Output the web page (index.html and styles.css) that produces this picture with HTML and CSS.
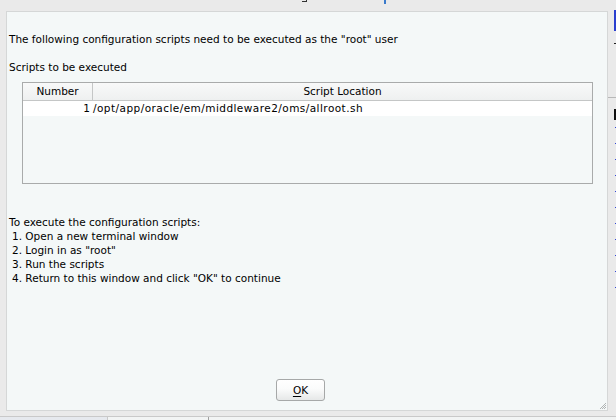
FILE: index.html
```html
<!DOCTYPE html>
<html>
<head>
<meta charset="utf-8">
<link rel="stylesheet" href="styles.css">
</head>
<body>
<div class="screen">
  <div class="topbar">
    <span class="frag frag-g"></span>
    <span class="frag frag-b"></span>
  </div>
  <div class="middle">
    <div class="dialog">
      <p class="intro">The following configuration scripts need to be executed as the "root" user</p>
      <p class="label">Scripts to be executed</p>
      <div class="table">
        <div class="thead">
          <div class="c-num">Number</div>
          <div class="c-loc">Script Location</div>
        </div>
        <div class="trow">
          <div class="c-num">1</div>
          <div class="c-loc path">/opt/app/oracle/em/middleware2/oms/allroot.sh</div>
        </div>
      </div>
      <div class="steps">
        <div>To execute the configuration scripts:</div>
        <div class="step">1. Open a new terminal window</div>
        <div class="step">2. Login in as "root"</div>
        <div class="step">3. Run the scripts</div>
        <div class="step">4. Return to this window and click "OK" to continue</div>
      </div>
      <div class="actions">
        <button class="btn"><u>O</u>K</button>
      </div>
      <svg class="grip" width="8" height="8" viewBox="0 0 8 8">
        <path d="M7 1 L1 7 M7 3 L3 7 M7 5 L5 7" stroke="#b0b4b4" stroke-width="1"/>
      </svg>
    </div>
    <div class="rstrip">
      <div class="r-blue"></div>
      <div class="r-tick"></div>
      <div class="r-line"></div>
      <div class="r-black"></div>
      <div class="r-dots"></div>
    </div>
  </div>
  <div class="tabs">
    <div class="tab tab1"></div>
    <div class="tab tab2"></div>
    <div class="tab tab3"></div>
  </div>
</div>
</body>
</html>
```

FILE: styles.css
```css
html, body {
  margin: 0;
  padding: 0;
}
body {
  width: 616px;
  height: 420px;
  overflow: hidden;
  background: #eaeaea;
  font-family: "DejaVu Sans", sans-serif;
  font-size: 10.5px;
  color: #000;
}
.screen {
  display: flex;
  flex-direction: column;
  height: 420px;
}
.topbar {
  height: 10px;
  position: relative;
}
.frag {
  position: absolute;
  top: 0;
}
.frag-g {
  left: 302px;
  width: 5px;
  height: 2px;
  border-bottom: 1px solid #333;
  border-right: 1px solid #333;
  box-sizing: border-box;
}
.frag-b {
  left: 384px;
  width: 2px;
  height: 4px;
  background: #3a7acb;
}
.middle {
  display: flex;
  height: 402px;
}
.dialog {
  position: relative;
  margin-left: 6px;
  margin-top: 1px;
  height: 398px;
  border: 1px solid #d5d7d7;
  background: #f4f8f8;
  padding: 0 2px;
  box-sizing: content-box;
  width: 598px;
}
.intro {
  margin: 20px 0 0 0;
  line-height: 14px;
}
.label {
  margin: 14px 0 0 0;
  line-height: 14px;
}
.table {
  margin: 8px 0 0 13px;
  width: 571px;
  height: 102px;
  border: 1px solid #a9abab;
  box-sizing: border-box;
}
.thead {
  display: flex;
  height: 18px;
  line-height: 16px;
  background: linear-gradient(#f8f9f9, #eef0f0);
  border-bottom: 1px solid #c4c6c6;
  box-sizing: border-box;
}
.thead .c-num {
  width: 69px;
  text-align: center;
  border-right: 1px solid #c4c6c6;
}
.thead .c-loc {
  flex: 1;
  text-align: center;
}
.trow {
  display: flex;
  height: 15px;
  line-height: 14px;
  background: #fff;
}
.trow .c-num {
  width: 67px;
  text-align: right;
}
.trow .c-loc {
  flex: 1;
  padding-left: 3px;
}
.path {
  letter-spacing: 0.45px;
}
.steps {
  margin: 31px 0 0 0;
  line-height: 14px;
}
.step {
  padding-left: 3px;
}
.actions {
  margin: 94px 0 0 267px;
}
.btn {
  width: 49px;
  height: 22px;
  border: 1px solid #a6a8a8;
  border-radius: 3px;
  background: linear-gradient(#ffffff, #fafbfb 45%, #e6e8e8);
  font-family: "DejaVu Sans", sans-serif;
  font-size: 10.5px;
  color: #000;
  padding: 0;
}
.btn u {
  text-decoration: underline;
  text-underline-offset: 2px;
}
.grip {
  position: absolute;
  right: 0;
  bottom: 0;
}
.rstrip {
  flex: 1;
  display: flex;
  flex-direction: column;
  align-items: flex-end;
}
.r-blue {
  width: 2px;
  height: 21px;
  background: #2a3fcf;
}
.r-tick {
  margin-top: 12px;
  width: 2px;
  height: 1px;
  background: #222;
}
.r-line {
  margin-top: 53px;
  width: 8px;
  height: 1px;
  background: #b8b8b8;
}
.r-black {
  margin-top: 11px;
  width: 2px;
  height: 11px;
  background: #111;
}
.r-dots {
  margin-top: 7px;
  width: 1px;
  height: 170px;
  background: repeating-linear-gradient(#3347d6 0 1px, transparent 1px 16px);
}
.tabs {
  margin-top: 5px;
  display: flex;
  height: 3px;
  border-top: 1px solid #c9c9c9;
}
.tab1 {
  width: 107px;
  background: #e6e9ee;
}
.tab2 {
  width: 100px;
  border-left: 1px solid #c9c9c9;
  background: #f2f4f4;
}
.tab3 {
  flex: 1;
  border-left: 1px solid #a0a0a0;
  background: #f2f4f4;
}
```
